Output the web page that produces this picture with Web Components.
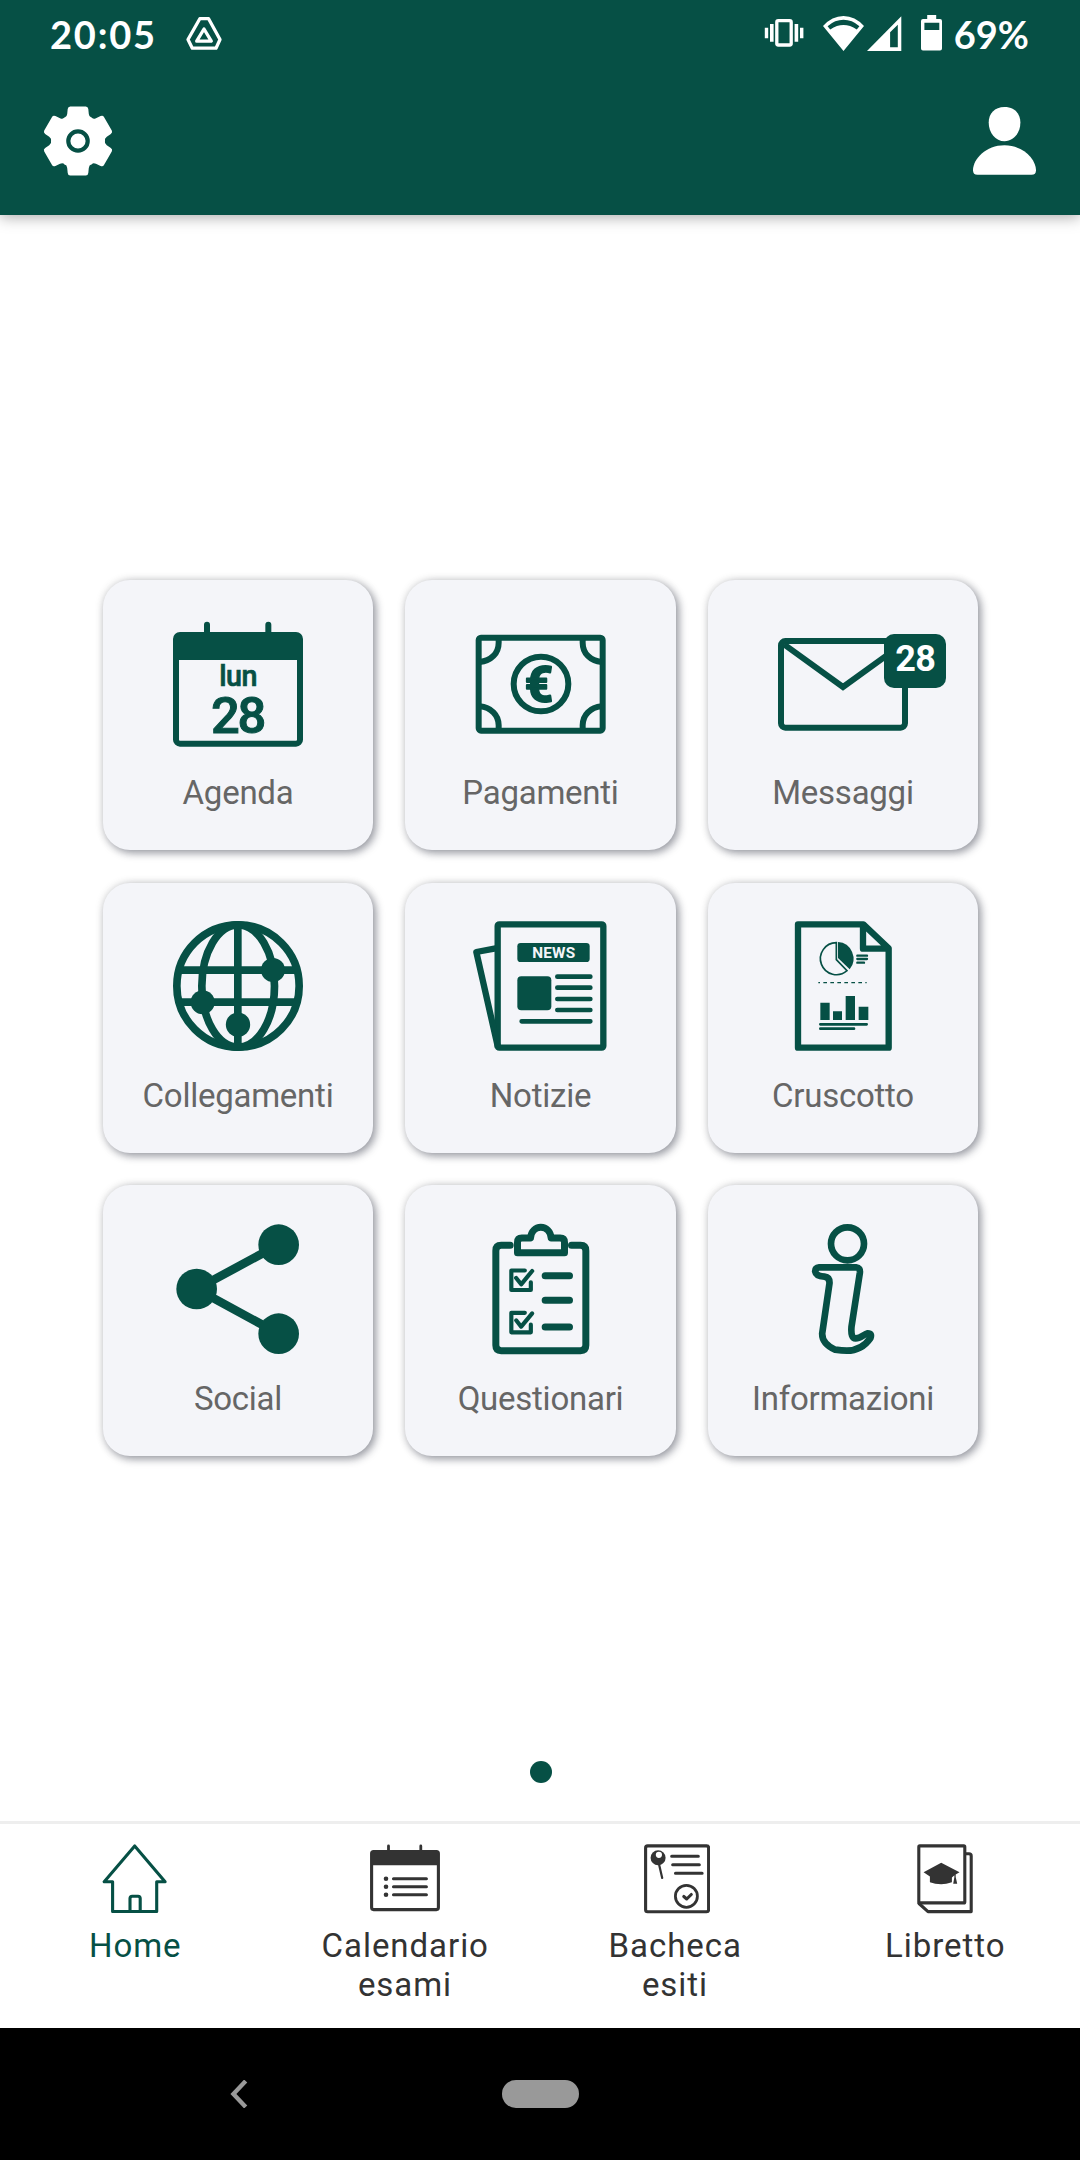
<!DOCTYPE html>
<html lang="it">
<head>
<meta charset="utf-8">
<title>Home</title>
<style>
	html, body {
		margin: 0;
		height: 100%;
		background: #fff;
		font-family: Roboto, "Noto Sans", sans-serif;
		--green: #065045;
		--tile: #f4f5f9;
	}
</style>
</head>
<body>
<uni-app>
	<status-bar slot="top" time="20:05" battery="69%"></status-bar>
	<tool-bar slot="top"></tool-bar>

	<menu-tile icon="agenda">Agenda</menu-tile>
	<menu-tile icon="pagamenti">Pagamenti</menu-tile>
	<menu-tile icon="messaggi" badge="28">Messaggi</menu-tile>
	<menu-tile icon="collegamenti">Collegamenti</menu-tile>
	<menu-tile icon="notizie">Notizie</menu-tile>
	<menu-tile icon="cruscotto">Cruscotto</menu-tile>
	<menu-tile icon="social">Social</menu-tile>
	<menu-tile icon="questionari">Questionari</menu-tile>
	<menu-tile icon="informazioni">Informazioni</menu-tile>

	<nav-tab slot="tabs" icon="home" active>Home</nav-tab>
	<nav-tab slot="tabs" icon="calendario">Calendario esami</nav-tab>
	<nav-tab slot="tabs" icon="bacheca">Bacheca esiti</nav-tab>
	<nav-tab slot="tabs" icon="libretto">Libretto</nav-tab>

	<system-nav slot="system"></system-nav>
</uni-app>

<script>
(function() {
	// tile icons, 390 x 390 units
	const tileIcons = {
		agenda: `
			<path d="M102 20V50M286 20V50" stroke-width="18" stroke-linecap="round"/>
			<rect x="9" y="51" width="372" height="326" rx="12" stroke-width="18"/>
			<path d="M9 60H381V126H9Z" fill="currentColor" stroke="none"/>
			<text x="196" y="203" font-size="86" font-weight="500" textLength="115" stroke="currentColor" stroke-width="2">lun</text>
			<text x="197" y="345" font-size="152" font-weight="500" textLength="166" stroke="currentColor" stroke-width="3">28</text>`,
		pagamenti: `
			<g stroke-width="18" transform="translate(2)">
				<rect x="9" y="59" width="372" height="279" rx="7"/>
				<path d="M69 60V74C69 106 46 129 12 132M321 60V74C321 106 344 129 378 132M69 336V322C69 291 46 268 12 265M321 336V322C321 291 344 268 378 265"/>
				<circle cx="196" cy="198" r="82"/>
			</g>
			<text x="192" y="251" font-size="148" font-weight="700" stroke="currentColor" stroke-width="6" stroke-linejoin="round">€</text>`,
		messaggi: `
			<rect x="9" y="69" width="372" height="260" rx="13" stroke-width="18"/>
			<path d="M18 79L195 207L372 79" stroke-width="18"/>`,
		collegamenti: `
			<g stroke-width="23">
				<circle cx="195" cy="195" r="183.5"/>
				<ellipse cx="195.5" cy="195" rx="109" ry="183.5"/>
				<path d="M194.500 10V380M18 147.500H372M18 243.500H372"/>
			</g>
			<g fill="currentColor" stroke="none">
				<circle cx="300" cy="147" r="36"/>
				<circle cx="89" cy="244" r="36"/>
				<circle cx="195" cy="311" r="36.500"/>
			</g>`,
		notizie: `
			<g stroke-width="19" stroke-linejoin="round">
				<rect x="68" y="10" width="317" height="370" rx="5"/>
				<path d="M62 82L4 93L69 380"/>
			</g>
			<g fill="currentColor" stroke="none">
				<rect x="127" y="66" width="217" height="57" rx="10"/>
				<rect x="127" y="166" width="102" height="102" rx="12"/>
			</g>
			<path d="M247 167H346M247 200H346M247 234H346M247 267H346M140 301H346" stroke-width="14" stroke-linecap="round"/>
			<text x="236" y="112" font-size="46" font-weight="700" style="fill: var(--tile)" textLength="129">NEWS</text>`,
		cruscotto: `
			<path d="M60 10H256L332 82V380H60ZM255 14V83H328" stroke-width="19" stroke-linejoin="round"/>
			<path d="M175 65A48 48 0 1 0 207 149L175 116Z" stroke-width="5"/>
			<path d="M180 63A49 50 0 0 1 215 145L180 111Z" fill="currentColor" stroke="none"/>
			<path d="M238 104H267M238 114H267M238 125H258" stroke-width="7" stroke-linecap="round"/>
			<path d="M121 185H266" stroke-width="3.500" stroke-dasharray="11 10" stroke-dashoffset="6"/>
			<path d="M127 245H155V297H127ZM165 271H192V297H165ZM203 225H231V297H203ZM242 257H271V297H242Z" fill="currentColor" stroke="none"/>
			<path d="M127 310H266M127 323H228" stroke-width="8" stroke-linecap="round"/>`,
		social: `
			<path d="M317 62L71 195L317 329" stroke-width="26"/>
			<g fill="currentColor" stroke="none">
				<circle cx="317" cy="62" r="61"/>
				<circle cx="71" cy="195" r="61"/>
				<circle cx="317" cy="329" r="61"/>
			</g>`,
		questionari: `
			<g stroke-width="21" stroke-linecap="round" stroke-linejoin="round" transform="translate(1.5)">
				<path d="M104 64H77Q61 64 61 80V364Q61 380 77 380H315Q331 380 331 364V80Q331 64 315 64H288"/>
				<path d="M126 86V55Q126 42 139 42H165C167 22 180 10 196 10S225 22 227 42H254Q267 42 267 55V86Z"/>
				<path d="M209 155H282M209 229H282M209 309H282"/>
			</g>
			<g stroke-width="12.500" stroke-linecap="round" stroke-linejoin="round" transform="translate(1.5)">
				<path d="M148 139.500H107.500V198H166V175M122 162L137 181L170 141"/>
				<path d="M148 266.500H107.500V325H166V302M122 289L137 308L170 268"/>
			</g>`,
		informazioni: `
			<g stroke-width="20" stroke-linejoin="round" transform="translate(1.5)">
				<circle cx="207" cy="59.500" r="49.500"/>
				<path d="M122 130H233Q246 131 244 147L219 308Q216 344 232 343C246 343 256 331 268 328Q281 328 276 342C258 368 232 380 205 380Q190 380 170 377C146 366 131 350 131 329L153 178Q154 160 138 158C124 157 112 154 110 142Q110 131 122 130Z"/>
			</g>`
	};

	// bottom bar icons, 70 x 70 units
	const tabIcons = {
		home: `
			<path d="M34.700 2L4.200 37.700H12.600V67.500H56.700V37.700H65.100ZM30 67V54.500Q30 52.200 32.200 52.200H38Q40.200 52.200 40.200 54.500V67"/>`,
		calendario: `
			<path d="M18.500 2V8M50.800 2V8" stroke-width="2.800"/>
			<rect x="1.600" y="7.600" width="66.800" height="58" rx="2"/>
			<path d="M1.600 8H68.400V21.300H1.600Z" fill="currentColor" stroke="none"/>
			<path d="M23.500 34.700H56.400M23.500 42.700H56.400M23.500 50.700H56.400"/>
			<path d="M16 34.700h.01M16 42.700h.01M16 50.700h.01" stroke-width="4.600"/>`,
		bacheca: `
			<rect x="5.600" y="1.900" width="63" height="65.800" rx="2"/>
			<circle cx="18.100" cy="13.700" r="7.500" fill="currentColor" stroke="none"/>
			<circle cx="18.900" cy="10.800" r="3.100" fill="#fff" stroke="none"/>
			<path d="M19.200 21L22.200 34" stroke-width="2.200"/>
			<path d="M31.700 12.300H58.300M32.700 20.700H59.300M35.500 29.300H62.100"/>
			<circle cx="46.400" cy="52.300" r="11" stroke-width="2.800"/>
			<path d="M43.800 52.500L46.700 55L51.300 50.500"/>`,
		libretto: `
			<rect x="8.800" y="1.900" width="46" height="57" rx="1"/>
			<path d="M56 9.800H59Q61.200 9.800 61.200 12V67.600H18L9 59.500"/>
			<path d="M31.200 18.700L49.500 28.300L45.700 30.500V33L47.200 39.800H43.200L44.400 33V31.300L41.900 33.500V38.300Q36 40.200 31.200 40.300Q25 40.200 19.900 38.300V32.500L13.600 28.300Z" fill="currentColor" stroke="none"/>`
	};

	class UniApp extends HTMLElement {
		constructor() {
			super();
			this.attachShadow({mode: "open"}).innerHTML = `
				<style>
					:host {
						display: flex;
						flex-direction: column;
						height: 2160px;
						width: 1080px;
						overflow: hidden;
					}
					header {
						height: 215px;
						flex: none;
						background: var(--green);
						color: #fff;
						box-shadow: 0 2px 14px rgba(0, 0, 0, .34);
					}
					main {
						flex: 1;
						display: flex;
						flex-direction: column;
						align-items: center;
						justify-content: space-between;
						padding: 364.800px 0 38px 0;
					}
					.grid {
						display: grid;
						grid-template-columns: repeat(3, 270.400px);
						grid-auto-rows: 270.400px;
						gap: 32.400px 32.100px;
						margin-left: 1px;
					}
					.dot {
						width: 22px;
						height: 22px;
						margin-left: 2px;
						border-radius: 50%;
						background: var(--green);
					}
					nav {
						display: grid;
						grid-template-columns: repeat(4, 1fr);
						height: 204px;
						flex: none;
						border-top: 3px solid #eee;
					}
				</style>
				<header><slot name="top"></slot></header>
				<main>
					<div class="grid"><slot></slot></div>
					<div class="dot"></div>
				</main>
				<nav><slot name="tabs"></slot></nav>
				<slot name="system"></slot>
			`;
		}
	}

	class StatusBar extends HTMLElement {
		constructor() {
			super();
			this.attachShadow({mode: "open"}).innerHTML = `
				<style>
					:host {
						display: flex;
						align-items: center;
						height: 66px;
						padding: 0 51px 0 50px;
						font: 700 38px/46px Lato, sans-serif;
					}
					svg { display: block; fill: currentColor; }
					span { padding-top: 2px; }
					.time { width: 136px; letter-spacing: 1.800px; }
					.right { display: flex; align-items: center; margin-left: auto; }
				</style>
				<span class="time">${this.getAttribute("time")}</span>
				<svg width="36" height="33" style="fill: none; stroke: currentColor; stroke-width: 3.3; stroke-linejoin: round">
					<path d="M13.800 1.700H22.600L34 22.500L30 31.200H6.300L2 22.500Z"/>
					<path d="M18 12L25.300 24.200H10.700Z"/>
				</svg>
				<div class="right">
					<svg width="40" height="30">
						<rect x="12.800" y="2.700" width="14.400" height="24.300" rx="1.500" fill="none" stroke="currentColor" stroke-width="3.300"/>
						<path d="M6 6h3.600v17.800H6zM.8 9.800h3.400v10.500H.8zM30.600 6h3.600v17.800h-3.600zM36 9.800h3.400v10.500H36z"/>
					</svg>
					<svg width="41" height="35" style="margin-left: 19px">
						<path fill-rule="evenodd" d="M20.500 35L0 10Q9 0 20.500 0T41 10ZM4.600 10.200L7.200 13.400Q14 9 20.500 9T33.800 13.400L36.400 10.200Q29 3.800 20.500 3.800T4.600 10.200Z"/>
					</svg>
					<svg width="35" height="35" style="margin-left: 3px">
						<path fill-rule="evenodd" d="M0 35L34.300 .3V35ZM23.100 16.300V31.300H30.800V8.700Z"/>
					</svg>
					<svg width="21" height="36" style="margin-left: 19px">
						<path fill-rule="evenodd" d="M6.200 0H15.200V4H19Q21 4 21 6V33.600Q21 35.600 19 35.600H2Q0 35.600 0 33.600V6Q0 4 2 4H6.200ZM3.400 7.700V15H18.300V7.700Z"/>
					</svg>
					<span style="margin-left: 12px">${this.getAttribute("battery")}</span>
				</div>
			`;
		}
	}

	class ToolBar extends HTMLElement {
		constructor() {
			super();
			// one sixth of the gear, turned round its centre
			let teeth = "";
			for (let a = 0; a < 360; a += 60) {
				teeth += `<path transform="rotate(${a})" d="M0 0L-14.500 -22.500L-13.600 -23.200Q-11 -24 -10.800 -27L-10.300 -32Q-10 -34.500 -7.800 -34.500H7.800Q10 -34.500 10.300 -32L10.800 -27Q11 -24 13.600 -23.200Z"/>`;
			}
			this.attachShadow({mode: "open"}).innerHTML = `
				<style>
					:host {
						display: flex;
						align-items: center;
						justify-content: space-between;
						height: 149px;
						padding: 0 44px 0 42.500px;
					}
					svg { display: block; fill: currentColor; }
				</style>
				<svg width="70" height="70" viewBox="-35 -35 70 70">
					<circle r="25"/>
					${teeth}
					<circle r="9.700" stroke-width="4.200" style="stroke: var(--green)"/>
				</svg>
				<svg width="63" height="68">
					<path d="M31.500 0C41.500 0 47.400 6.500 47.400 15.500C47.400 26 40.500 34.300 31.500 34.300S15.700 26 15.700 15.500C15.700 6.500 21.500 0 31.500 0Z"/>
					<path d="M31.500 38.300C50 38.300 63 52 63 63.300Q63 67.800 58.500 67.800H4.500Q0 67.800 0 63.300C0 52 13 38.300 31.500 38.300Z"/>
				</svg>
			`;
		}
	}

	class MenuTile extends HTMLElement {
		constructor() {
			super();
			const badge = this.getAttribute("badge");
			this.attachShadow({mode: "open"}).innerHTML = `
				<style>
					:host {
						display: flex;
						flex-direction: column;
						align-items: center;
						position: relative;
						box-sizing: border-box;
						padding-top: 38.300px;
						border-radius: 27px;
						background: var(--tile);
						box-shadow: 3px 3px 9px rgba(20, 24, 45, .4), 0 0 10px rgba(0, 0, 0, .12);
						color: var(--green);
					}
					svg {
						display: block;
						overflow: visible;
						fill: none;
						stroke: currentColor;
					}
					text { fill: currentColor; stroke: none; text-anchor: middle; }
					text[stroke] { stroke: currentColor; }
					.label {
						margin-top: 25px;
						font-size: 33px;
						line-height: 39px;
						letter-spacing: -.25px;
						color: #666;
						white-space: nowrap;
					}
					.badge {
						position: absolute;
						left: 176px;
						top: 54.300px;
						width: 62px;
						height: 54px;
						box-sizing: border-box;
						padding: 4px 0 0 1px;
						border-radius: 10px;
						background: var(--green);
						color: #fff;
						font-weight: 700;
						font-size: 36px;
						line-height: 42px;
						letter-spacing: -.5px;
						text-align: center;
					}
				</style>
				<svg width="130" height="130" viewBox="0 0 390 390">${tileIcons[this.getAttribute("icon")]}</svg>
				<div class="label"><slot></slot></div>
				${badge ? `<div class="badge">${badge}</div>` : ""}
			`;
		}
	}

	class NavTab extends HTMLElement {
		constructor() {
			super();
			this.attachShadow({mode: "open"}).innerHTML = `
				<style>
					:host {
						display: flex;
						flex-direction: column;
						align-items: center;
						padding-top: 20px;
						color: #333;
					}
					:host([active]) { color: var(--green); }
					svg {
						display: block;
						fill: none;
						stroke: currentColor;
						stroke-width: 3.1;
						stroke-linecap: round;
						stroke-linejoin: round;
					}
					.label {
						width: 180px;
						margin-top: 12px;
						font-size: 33px;
						line-height: 39px;
						letter-spacing: .95px;
						text-indent: .5px;
						text-align: center;
					}
				</style>
				<svg width="70" height="70">${tabIcons[this.getAttribute("icon")]}</svg>
				<div class="label"><slot></slot></div>
			`;
		}
	}

	class SystemNav extends HTMLElement {
		constructor() {
			super();
			this.attachShadow({mode: "open"}).innerHTML = `
				<style>
					:host {
						display: grid;
						grid-template-columns: 502px 77px;
						align-items: center;
						height: 132px;
						flex: none;
						background: #000;
					}
					svg { display: block; margin-left: 230px; }
					.pill { height: 28px; border-radius: 14px; background: #999; }
				</style>
				<svg width="18" height="28"><path d="M15.700 1L3.400 14L15.700 27" fill="none" stroke="#999" stroke-width="4.300"/></svg>
				<div class="pill"></div>
			`;
		}
	}

	customElements.define("uni-app", UniApp);
	customElements.define("status-bar", StatusBar);
	customElements.define("tool-bar", ToolBar);
	customElements.define("menu-tile", MenuTile);
	customElements.define("nav-tab", NavTab);
	customElements.define("system-nav", SystemNav);
})();
</script>
</body>
</html>
